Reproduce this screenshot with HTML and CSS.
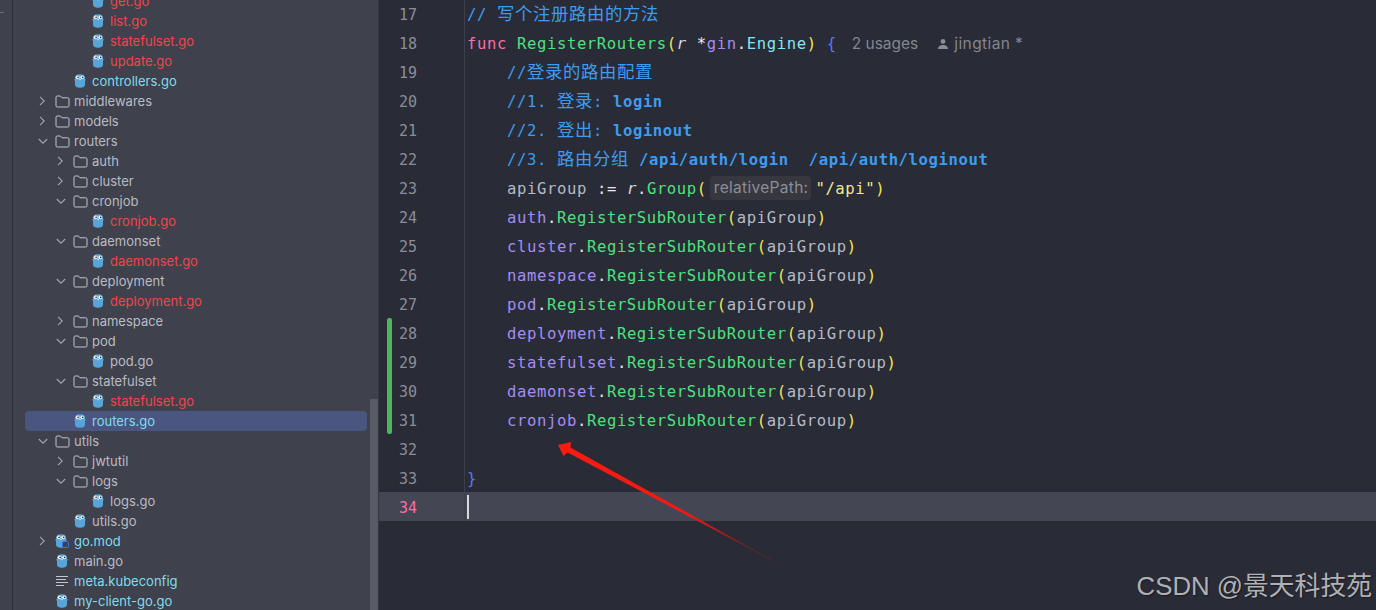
FILE: index.html
```html
<!DOCTYPE html>
<html lang="zh">
<head>
<meta charset="utf-8">
<title>routers.go</title>
<link rel="stylesheet" href="styles.css">
</head>
<body>
<svg class="defs" width="0" height="0" aria-hidden="true">
  <symbol id="gopher" viewBox="0 0 12 14">
    <path d="M1.300 5.500 0.400 6.200M10.700 5.500 11.600 6.200" stroke="#7d95a3" stroke-width="1.200" fill="none"/>
    <path d="M1 3.800C1 1.300 3.200.3 6 .3s5 1 5 3.500v6.400c0 2.600-2.200 3.500-5 3.500s-5-.9-5-3.500z" fill="#56a4d8"/>
    <circle cx="3.700" cy="3.300" r="1.900" fill="#eef5f8"/>
    <circle cx="8.300" cy="3.300" r="1.900" fill="#eef5f8"/>
    <circle cx="4.100" cy="3.400" r=".8" fill="#26323c"/>
    <circle cx="8.700" cy="3.400" r=".8" fill="#26323c"/>
    <ellipse cx="6" cy="5.600" rx="1.100" ry=".7" fill="#d8dfe0"/>
  </symbol>
  <symbol id="folder" viewBox="0 0 15 13">
    <path d="M1 2.200c0-.7.5-1.200 1.200-1.200h3.200l1.600 1.800h5.800c.7 0 1.200.5 1.200 1.200v6.800c0 .7-.5 1.200-1.200 1.200H2.200c-.7 0-1.200-.5-1.200-1.200z" fill="none" stroke="#c3c6cc" stroke-width="1"/>
  </symbol>
  <symbol id="open" viewBox="0 0 10 10"><path d="M.8 3l4.200 4.200L9.200 3" fill="none" stroke="#a3a6ad" stroke-width="1.100"/></symbol>
  <symbol id="closed" viewBox="0 0 10 10"><path d="M2 .8l4.200 4.200L2 9.200" fill="none" stroke="#a3a6ad" stroke-width="1.100"/></symbol>
</svg>

<main class="ide">
  <div class="strip"><span class="strip-mark"></span></div>

  <nav class="sidebar">
    <div class="tree">
      <div class="row d3"><svg class="go"><use href="#gopher"/></svg><span class="err">get.go</span></div>
      <div class="row d3"><svg class="go"><use href="#gopher"/></svg><span class="err">list.go</span></div>
      <div class="row d3"><svg class="go"><use href="#gopher"/></svg><span class="err">statefulset.go</span></div>
      <div class="row d3"><svg class="go"><use href="#gopher"/></svg><span class="err">update.go</span></div>
      <div class="row d2"><svg class="go"><use href="#gopher"/></svg><span class="new">controllers.go</span></div>
      <div class="row d0"><svg class="chev"><use href="#closed"/></svg><svg class="fold"><use href="#folder"/></svg><span>middlewares</span></div>
      <div class="row d0"><svg class="chev"><use href="#closed"/></svg><svg class="fold"><use href="#folder"/></svg><span>models</span></div>
      <div class="row d0"><svg class="chev"><use href="#open"/></svg><svg class="fold"><use href="#folder"/></svg><span>routers</span></div>
      <div class="row d1"><svg class="chev"><use href="#closed"/></svg><svg class="fold"><use href="#folder"/></svg><span>auth</span></div>
      <div class="row d1"><svg class="chev"><use href="#closed"/></svg><svg class="fold"><use href="#folder"/></svg><span>cluster</span></div>
      <div class="row d1"><svg class="chev"><use href="#open"/></svg><svg class="fold"><use href="#folder"/></svg><span>cronjob</span></div>
      <div class="row d3"><svg class="go"><use href="#gopher"/></svg><span class="err">cronjob.go</span></div>
      <div class="row d1"><svg class="chev"><use href="#open"/></svg><svg class="fold"><use href="#folder"/></svg><span>daemonset</span></div>
      <div class="row d3"><svg class="go"><use href="#gopher"/></svg><span class="err">daemonset.go</span></div>
      <div class="row d1"><svg class="chev"><use href="#open"/></svg><svg class="fold"><use href="#folder"/></svg><span>deployment</span></div>
      <div class="row d3"><svg class="go"><use href="#gopher"/></svg><span class="err">deployment.go</span></div>
      <div class="row d1"><svg class="chev"><use href="#closed"/></svg><svg class="fold"><use href="#folder"/></svg><span>namespace</span></div>
      <div class="row d1"><svg class="chev"><use href="#open"/></svg><svg class="fold"><use href="#folder"/></svg><span>pod</span></div>
      <div class="row d3"><svg class="go"><use href="#gopher"/></svg><span>pod.go</span></div>
      <div class="row d1"><svg class="chev"><use href="#open"/></svg><svg class="fold"><use href="#folder"/></svg><span>statefulset</span></div>
      <div class="row d3"><svg class="go"><use href="#gopher"/></svg><span class="err">statefulset.go</span></div>
      <div class="row d2 selected"><svg class="go"><use href="#gopher"/></svg><span class="new">routers.go</span></div>
      <div class="row d0"><svg class="chev"><use href="#open"/></svg><svg class="fold"><use href="#folder"/></svg><span>utils</span></div>
      <div class="row d1"><svg class="chev"><use href="#closed"/></svg><svg class="fold"><use href="#folder"/></svg><span>jwtutil</span></div>
      <div class="row d1"><svg class="chev"><use href="#open"/></svg><svg class="fold"><use href="#folder"/></svg><span>logs</span></div>
      <div class="row d3"><svg class="go"><use href="#gopher"/></svg><span>logs.go</span></div>
      <div class="row d2"><svg class="go"><use href="#gopher"/></svg><span>utils.go</span></div>
      <div class="row d0"><svg class="chev"><use href="#closed"/></svg><span class="modicon"><svg class="go"><use href="#gopher"/></svg><i class="modbadge"></i></span><span class="new">go.mod</span></div>
      <div class="row d0 leaf"><svg class="go"><use href="#gopher"/></svg><span>main.go</span></div>
      <div class="row d0 leaf"><span class="lines"><i></i><i></i><i></i><i></i></span><span class="new">meta.kubeconfig</span></div>
      <div class="row d0 leaf"><svg class="go"><use href="#gopher"/></svg><span class="new">my-client-go.go</span></div>
    </div>
    <div class="scrollthumb"></div>
  </nav>

  <section class="editor">
    <div class="code">
      <div class="ln"><span class="num">17</span><span class="src"><span class="cm">// <span class="zh">写个注册路由的方法</span></span></span></div>
      <div class="ln"><span class="num">18</span><span class="src"><span class="kw">func</span> <span class="fn">RegisterRouters</span><span class="yl">(</span><i class="par">r</i> <span class="wh">*</span><span class="pk">gin</span><span class="wh">.</span><span class="ty">Engine</span><span class="yl">)</span> <span class="br">{</span><span class="hint usages">2 usages</span><span class="hint author"><svg class="person" viewBox="0 0 12 12"><circle cx="6" cy="3.400" r="2.400"/><path d="M1 11c0-2.800 2.400-4 5-4s5 1.200 5 4z"/></svg>jingtian *</span></span></div>
      <div class="ln"><span class="num">19</span><span class="src ind"><span class="cm">//<span class="zh">登录的路由配置</span></span></span></div>
      <div class="ln"><span class="num">20</span><span class="src ind"><span class="cm">//1. <span class="zh">登录</span>: <b>login</b></span></span></div>
      <div class="ln"><span class="num">21</span><span class="src ind"><span class="cm">//2. <span class="zh">登出</span>: <b>loginout</b></span></span></div>
      <div class="ln"><span class="num">22</span><span class="src ind"><span class="cm">//3. <span class="zh">路由分组</span> <b>/api/auth/login&nbsp; /api/auth/loginout</b></span></span></div>
      <div class="ln"><span class="num">23</span><span class="src ind"><span class="id">apiGroup</span> <span class="wh">:=</span> <i class="par">r</i><span class="wh">.</span><span class="fn">Group</span><span class="yl">(</span><span class="inlay">relativePath:</span><span class="str">"/api"</span><span class="yl">)</span></span></div>
      <div class="ln"><span class="num">24</span><span class="src ind"><span class="pk">auth</span><span class="wh">.</span><span class="fn">RegisterSubRouter</span><span class="yl">(</span><span class="id">apiGroup</span><span class="yl">)</span></span></div>
      <div class="ln"><span class="num">25</span><span class="src ind"><span class="pk">cluster</span><span class="wh">.</span><span class="fn">RegisterSubRouter</span><span class="yl">(</span><span class="id">apiGroup</span><span class="yl">)</span></span></div>
      <div class="ln"><span class="num">26</span><span class="src ind"><span class="pk">namespace</span><span class="wh">.</span><span class="fn">RegisterSubRouter</span><span class="yl">(</span><span class="id">apiGroup</span><span class="yl">)</span></span></div>
      <div class="ln"><span class="num">27</span><span class="src ind"><span class="pk">pod</span><span class="wh">.</span><span class="fn">RegisterSubRouter</span><span class="yl">(</span><span class="id">apiGroup</span><span class="yl">)</span></span></div>
      <div class="ln changed first"><span class="num">28</span><span class="src ind"><span class="pk">deployment</span><span class="wh">.</span><span class="fn">RegisterSubRouter</span><span class="yl">(</span><span class="id">apiGroup</span><span class="yl">)</span></span></div>
      <div class="ln changed"><span class="num">29</span><span class="src ind"><span class="pk">statefulset</span><span class="wh">.</span><span class="fn">RegisterSubRouter</span><span class="yl">(</span><span class="id">apiGroup</span><span class="yl">)</span></span></div>
      <div class="ln changed"><span class="num">30</span><span class="src ind"><span class="pk">daemonset</span><span class="wh">.</span><span class="fn">RegisterSubRouter</span><span class="yl">(</span><span class="id">apiGroup</span><span class="yl">)</span></span></div>
      <div class="ln changed last"><span class="num">31</span><span class="src ind"><span class="pk">cronjob</span><span class="wh">.</span><span class="fn">RegisterSubRouter</span><span class="yl">(</span><span class="id">apiGroup</span><span class="yl">)</span></span></div>
      <div class="ln"><span class="num">32</span><span class="src"></span></div>
      <div class="ln"><span class="num">33</span><span class="src"><span class="br">}</span></span></div>
      <div class="ln current"><span class="num">34</span><span class="src"><span class="caret"></span></span></div>
    </div>
    <svg class="arrow" viewBox="0 0 240 140" aria-hidden="true">
      <defs>
        <linearGradient id="tail" x1="0" y1="0" x2="1" y2="0.55">
          <stop offset="0" stop-color="#fb1a10"/><stop offset=".7" stop-color="#f01a12"/><stop offset="1" stop-color="#7a2020"/>
        </linearGradient>
      </defs>
      <path d="M1 4 14 1 13.500 6.500 226 125 10.500 11.500 6.500 15z" fill="url(#tail)"/>
    </svg>
  </section>
</main>
<div class="watermark">CSDN @景天科技苑</div>
</body>
</html>
```
FILE: styles.css
```css
* { box-sizing: border-box; }
html, body { margin: 0; height: 100%; overflow: hidden; background: #292b36; }
.defs { position: absolute; }
.ide { display: flex; height: 610px; width: 1376px; }

.strip { width: 13px; flex: none; background: #3f414d; border-right: 1px solid #2d2f39; position: relative; }
.strip-mark { display: block; margin-top: 12px; width: 4px; height: 1px; background: #6a6c76; }

.sidebar { width: 366px; flex: none; background: #3f414d; border-right: 1px solid #33353f; position: relative; overflow: hidden; font: 13px/20px Inter, "Noto Sans", sans-serif; color: #b9bcc3; }
.tree { margin-top: -9px; padding: 0 11px 0 12px; }
.row { height: 20px; display: flex; align-items: center; white-space: nowrap; border-radius: 4px; }
.row.d0 { padding-left: 13px; }
.row.d1 { padding-left: 31px; }
.row.d2 { padding-left: 49px; }
.row.d3 { padding-left: 67px; }
.row.d0.leaf { padding-left: 31px; }
.row.selected { background: #4b5680; }
.row span { display: block; }
.chev { width: 10px; height: 10px; flex: none; margin-right: 7px; }
.fold { width: 15px; height: 13px; flex: none; margin-right: 4px; }
.go { width: 12px; height: 14px; flex: none; margin-right: 6px; display: block; }
.err { color: #f2444b; }
.new { color: #7fdcec; }
.modicon { position: relative; width: 19px; height: 14px; flex: none; }
.modbadge { position: absolute; left: 7px; top: 7px; width: 7px; height: 7px; border: 1.5px solid #3f6fe8; border-radius: 2px; background: #3f414d; }
.lines { width: 13px; margin-right: 5px; flex: none; }
.lines i { display: block; height: 1px; background: #c3c6cc; margin-bottom: 2px; }
.lines i:nth-child(1), .lines i:nth-child(3) { width: 12px; }
.lines i:nth-child(2) { width: 10px; }
.lines i:nth-child(4) { width: 8px; margin-bottom: 0; }
.scrollthumb { position: absolute; right: 0; top: 399px; bottom: 0; width: 8px; background: #585a65; }

.editor { flex: 1; min-width: 0; position: relative; background: #292b36; }
.code { margin-top: -1px; font: 15.6px/29px "DejaVu Sans Mono", "Noto Sans CJK SC", monospace; letter-spacing: .6px; }
.ln { height: 29px; display: flex; position: relative; white-space: pre; }
.num { width: 86px; flex: none; border-right: 1px solid #3d3f4a; padding: 2px 0 0 20px; color: #8b8e99; font-size: 15px; letter-spacing: 0; }
.src { padding: 2px 0 0 2px; display: block; }
.src.ind { padding-left: 42px; }
.changed::before { content: ""; position: absolute; left: 8px; top: 0; bottom: 0; width: 5px; background: #4cb55e; }
.first::before { border-radius: 2px 2px 0 0; }
.last::before { border-radius: 0 0 2px 2px; }
.current { background: #444654; }
.current .num { color: #f76fa8; }
.cm { color: #3d9cf0; }
.cm b { font-weight: 700; }
.zh { font-size: 17.4px; line-height: 0; }
.kw { color: #f86fa9; }
.fn { color: #4fe07e; }
.yl { color: #f4e94f; }
.br { color: #5a78ee; }
.par { color: #d8dae0; font-style: italic; }
.wh { color: #e6e8ee; }
.pk { color: #a58cf2; }
.ty { color: #82e6f4; }
.id { color: #b6bac6; }
.str { color: #f3e98a; }
.hint { font: 15.5px/27px Inter, "Noto Sans", sans-serif; letter-spacing: 0; color: #83868f; }
.usages { margin-left: 15px; }
.author { margin-left: 19px; letter-spacing: .4px; }
.person { width: 12px; height: 12px; fill: #8b8e97; margin-right: 5px; vertical-align: -1px; }
.inlay { display: inline-block; font: 15.5px/24px Inter, "Noto Sans", sans-serif; letter-spacing: .3px; color: #8b8e97; background: #36373f; border-radius: 4px; padding: 0 3px 0 4px; margin: 0 4px 0 3px; vertical-align: 1px; }
.caret { display: block; width: 2px; height: 24px; margin-top: 1px; background: #d6d8dc; }
.arrow { position: absolute; left: 178px; top: 441px; width: 240px; height: 140px; }

.watermark { position: absolute; right: 4px; top: 570px; font: 25.8px/32px "Liberation Sans", "Noto Sans CJK SC", sans-serif; color: #b0b1b4; text-shadow: 1px 1px 1px #1a1b22; }
```
